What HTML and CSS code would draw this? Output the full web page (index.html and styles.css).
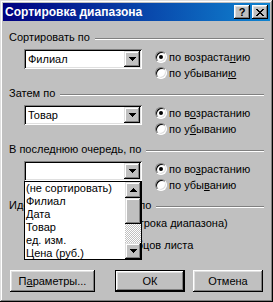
FILE: index.html
```html
<!doctype html>
<html lang="ru">
  <head>
    <meta charset="UTF-8" />
    <meta name="viewport" content="width=device-width, initial-scale=1.0" />
    <title>Сортировка диапазона</title>
    <link rel="stylesheet" href="styles.css">
  </head>
  <body>
    <div class="window">
      <div class="titlebar">
        <span class="title">Сортировка диапазона</span>
        <div class="title-buttons">
          <span class="tbtn help">?</span>
          <span class="tbtn close">
            <svg width="8" height="7" viewBox="0 0 8 7" shape-rendering="crispEdges">
              <path d="M0 0h2v1h1v1h2v-1h1v-1h2v1h-1v1h-1v1h-1v1h1v1h1v1h1v1h-2v-1h-1v-1h-2v1h-1v1h-2v-1h1v-1h1v-1h1v-1h-1v-1h-1v-1h-1z" fill="#000"/>
            </svg>
          </span>
        </div>
      </div>

      <div class="body">
        <section class="group">
          <div class="group-head"><span>Сортировать по</span><i class="etch"></i></div>
          <div class="group-row">
            <div class="combo">
              <span class="combo-value">Филиал</span>
              <span class="combo-btn"><svg width="7" height="4" viewBox="0 0 7 4" shape-rendering="crispEdges"><path d="M0 0h7v1h-1v1h-1v1h-1v1h-1v-1h-1v-1h-1v-1h-1z" fill="#000"/></svg></span>
            </div>
            <div class="radios">
              <label class="radio"><span class="radio-box checked"></span><span>по возраста<u>н</u>ию</span></label>
              <label class="radio"><span class="radio-box"></span><span>по убывани<u>ю</u></span></label>
            </div>
          </div>
        </section>

        <section class="group">
          <div class="group-head"><span>Затем по</span><i class="etch"></i></div>
          <div class="group-row">
            <div class="combo">
              <span class="combo-value">Товар</span>
              <span class="combo-btn"><svg width="7" height="4" viewBox="0 0 7 4" shape-rendering="crispEdges"><path d="M0 0h7v1h-1v1h-1v1h-1v1h-1v-1h-1v-1h-1v-1h-1z" fill="#000"/></svg></span>
            </div>
            <div class="radios">
              <label class="radio"><span class="radio-box checked"></span><span>по в<u>о</u>зрастанию</span></label>
              <label class="radio"><span class="radio-box"></span><span>по у<u>б</u>ыванию</span></label>
            </div>
          </div>
        </section>

        <section class="group">
          <div class="group-head"><span>В последнюю очередь, по</span><i class="etch"></i></div>
          <div class="group-row">
            <div class="combo open">
              <span class="combo-value"></span>
              <span class="combo-btn"><svg width="7" height="4" viewBox="0 0 7 4" shape-rendering="crispEdges"><path d="M0 0h7v1h-1v1h-1v1h-1v1h-1v-1h-1v-1h-1v-1h-1z" fill="#000"/></svg></span>
              <div class="dropdown">
                <ul class="dropdown-items">
                  <li>(не сортировать)</li>
                  <li>Филиал</li>
                  <li>Дата</li>
                  <li>Товар</li>
                  <li>ед. изм.</li>
                  <li>Цена (руб.)</li>
                </ul>
                <div class="scrollbar">
                  <span class="sbtn"><svg width="7" height="4" viewBox="0 0 7 4" shape-rendering="crispEdges"><path d="M3 0h1v1h1v1h1v1h1v1h-7v-1h1v-1h1v-1h1z" fill="#000"/></svg></span>
                  <span class="thumb"></span>
                  <span class="track"></span>
                  <span class="sbtn"><svg width="7" height="4" viewBox="0 0 7 4" shape-rendering="crispEdges"><path d="M0 0h7v1h-1v1h-1v1h-1v1h-1v-1h-1v-1h-1v-1h-1z" fill="#000"/></svg></span>
                </div>
              </div>
            </div>
            <div class="radios">
              <label class="radio"><span class="radio-box checked"></span><span>по во<u>з</u>растанию</span></label>
              <label class="radio"><span class="radio-box"></span><span>по убы<u>в</u>анию</span></label>
            </div>
          </div>
        </section>

        <section class="group">
          <div class="group-head"><span>Идентифицировать поля по</span><i class="etch"></i></div>
          <div class="radios field-radios">
            <label class="radio"><span class="radio-box checked"></span><span>подписям (первая строка диапазона)</span></label>
            <label class="radio"><span class="radio-box"></span><span>обозначениям столбцов листа</span></label>
          </div>
        </section>

        <div class="buttons">
          <button class="btn btn-params">П<u>а</u>раметры...</button>
          <button class="btn btn-default">ОК</button>
          <button class="btn btn-cancel">Отмена</button>
        </div>
      </div>
    </div>
  </body>
</html>
```

FILE: styles.css
```css
body {
  margin: 0;
  font-family: "Liberation Sans", Arial, sans-serif;
  font-size: 11px;
  color: #000;
  background: #c0c0c0;
}
.window {
  width: 273px;
  height: 302px;
  box-sizing: border-box;
  padding: 3px;
  background: #c0c0c0;
  box-shadow: inset -1px -1px #000, inset 1px 1px #dfdfdf,
    inset -2px -2px #808080, inset 2px 2px #fff;
}
.titlebar {
  height: 18px;
  display: flex;
  align-items: center;
  justify-content: space-between;
  padding: 0 2px;
  background: linear-gradient(to right, #000080, #1084d0);
  color: #fff;
}
.title {
  font-weight: bold;
  font-size: 12px;
}
.title-buttons {
  display: flex;
  gap: 2px;
}
.tbtn {
  width: 16px;
  height: 14px;
  display: flex;
  align-items: center;
  justify-content: center;
  background: #c0c0c0;
  color: #000;
  font-weight: bold;
  font-size: 11px;
  box-shadow: inset -1px -1px #000, inset 1px 1px #fff,
    inset -2px -2px #808080, inset 2px 2px #dfdfdf;
}
.body {
  padding: 10px 6px 0 6px;
}
.group + .group {
  margin-top: 6px;
}
.group-head {
  height: 13px;
  line-height: 13px;
  display: flex;
  align-items: center;
  gap: 5px;
  white-space: nowrap;
}
.etch {
  flex: 1;
  height: 0;
  margin-top: 2px;
  border-top: 1px solid #808080;
  border-bottom: 1px solid #fff;
}
.group-row {
  display: flex;
  margin-top: 5px;
  padding-left: 15px;
}
.combo {
  position: relative;
  width: 118px;
  height: 20px;
  box-sizing: border-box;
  padding: 2px;
  display: flex;
  background: #fff;
  box-shadow: inset 1px 1px #808080, inset -1px -1px #fff,
    inset 2px 2px #000, inset -2px -2px #dfdfdf;
}
.combo-value {
  flex: 1;
  line-height: 16px;
  padding-left: 2px;
}
.combo-btn,
.sbtn {
  width: 16px;
  height: 16px;
  display: flex;
  align-items: center;
  justify-content: center;
  background: #c0c0c0;
  box-shadow: inset -1px -1px #000, inset 1px 1px #dfdfdf,
    inset -2px -2px #808080, inset 2px 2px #fff;
}
.dropdown {
  position: absolute;
  top: 100%;
  left: 0;
  width: 118px;
  height: 79px;
  box-sizing: border-box;
  border: 1px solid #000;
  background: #fff;
  display: flex;
  z-index: 2;
}
.dropdown-items {
  flex: 1;
  margin: 0;
  padding: 0;
  list-style: none;
}
.dropdown-items li {
  height: 13px;
  line-height: 13px;
  padding-left: 1px;
  white-space: nowrap;
}
.scrollbar {
  width: 16px;
  display: flex;
  flex-direction: column;
}
.thumb {
  height: 26px;
  background: #c0c0c0;
  box-shadow: inset -1px -1px #000, inset 1px 1px #dfdfdf,
    inset -2px -2px #808080, inset 2px 2px #fff;
}
.track {
  flex: 1;
  background: repeating-conic-gradient(#fff 0 25%, #c0c0c0 0 50%) 0 0 / 2px 2px;
}
.radios {
  display: flex;
  flex-direction: column;
  margin-left: 13px;
}
.radio {
  height: 16px;
  display: flex;
  align-items: center;
  gap: 2px;
  white-space: nowrap;
}
.radio-box {
  width: 12px;
  height: 12px;
  box-sizing: border-box;
  border-radius: 50%;
  background: #fff;
  border: 1px solid;
  border-color: #808080 #fff #fff #808080;
  box-shadow: inset 1px 1px #000, inset -1px -1px #dfdfdf;
  position: relative;
}
.radio-box.checked::after {
  content: "";
  position: absolute;
  left: 3px;
  top: 3px;
  width: 4px;
  height: 4px;
  border-radius: 50%;
  background: #000;
}
.field-radios {
  margin: 3px 0 0 15px;
  gap: 6px;
}
.buttons {
  display: flex;
  margin-top: 17px;
}
.btn {
  height: 22px;
  padding: 0;
  border: none;
  font-family: inherit;
  font-size: 11px;
  color: #000;
  background: #c0c0c0;
  box-shadow: inset -1px -1px #000, inset 1px 1px #fff,
    inset -2px -2px #808080, inset 2px 2px #dfdfdf;
}
.btn-params {
  width: 85px;
  margin-left: 1px;
}
.btn-default {
  width: 70px;
  margin-left: 20px;
  border: 1px solid #000;
}
.btn-cancel {
  width: 70px;
  margin-left: 8px;
}
```
